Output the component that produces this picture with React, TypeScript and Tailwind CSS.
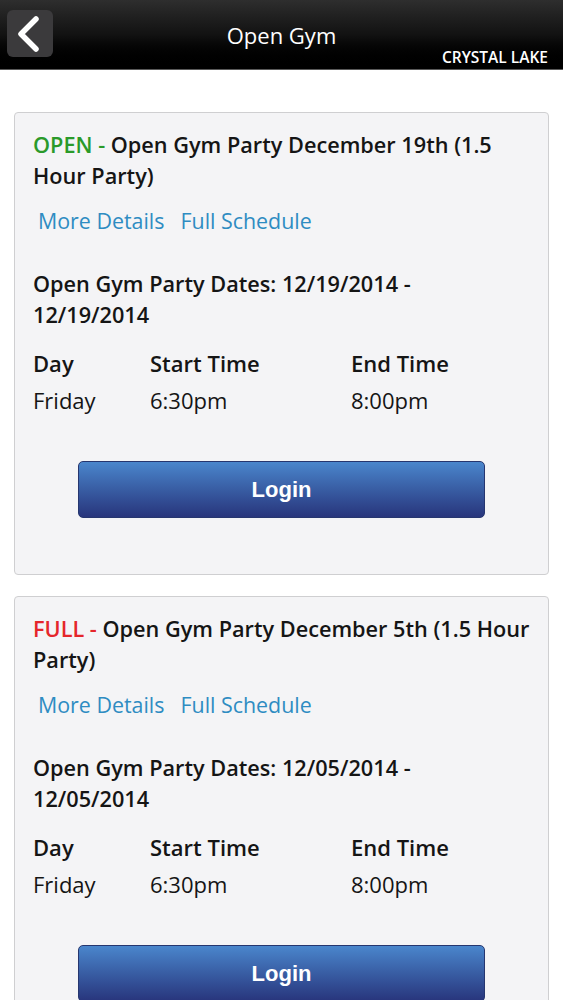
import React from "react";

type Party = {
  status: "OPEN" | "FULL";
  title: string;
  from: string;
  to: string;
  day: string;
  start: string;
  end: string;
};

const parties: Party[] = [
  {
    status: "OPEN",
    title: "Open Gym Party December 19th (1.5 Hour Party)",
    from: "12/19/2014",
    to: "12/19/2014",
    day: "Friday",
    start: "6:30pm",
    end: "8:00pm",
  },
  {
    status: "FULL",
    title: "Open Gym Party December 5th (1.5 Hour Party)",
    from: "12/05/2014",
    to: "12/05/2014",
    day: "Friday",
    start: "6:30pm",
    end: "8:00pm",
  },
];

const Header = () => (
  <div className="relative h-[70px] w-full bg-gradient-to-b from-[#2e2e2e] via-[#121212] to-black border-b border-[#5a5a5a]">
    <button className="absolute left-[7px] top-[10px] h-[47px] w-[46px] rounded-[6px] bg-[#3b3a3c] flex items-center justify-center">
      <svg width="30" height="40" viewBox="0 0 30 40" fill="none">
        <path
          d="M21 5 L6 20 L21 35"
          stroke="white"
          strokeWidth="5.5"
          strokeLinecap="round"
          strokeLinejoin="round"
        />
      </svg>
    </button>
    <div className="absolute inset-x-0 top-[19px] text-center text-white text-[22px] leading-[32px]">
      Open Gym
    </div>
    <div className="absolute right-[15px] top-[46px] text-white text-[15.5px] leading-[22px] font-semibold">
      CRYSTAL LAKE
    </div>
  </div>
);

const PartyCard = ({ party }: { party: Party }) => (
  <div className="rounded-[4px] border border-[#cfcfd1] bg-[#f4f4f6] pl-[18px] pr-[14px] pt-[16px] pb-[56px]">
    <div className="text-[21.7px] leading-[31px] font-semibold text-[#151515]">
      <span
        className={
          party.status === "OPEN" ? "text-[#2a9a2a]" : "text-[#e5262b]"
        }
      >
        {party.status} -{" "}
      </span>
      {party.title}
    </div>

    <div className="mt-[14px] flex gap-[16px] pl-[5px] text-[21.4px] leading-[31px] text-[#2e8cc2]">
      <span>More Details</span>
      <span>Full Schedule</span>
    </div>

    <p className="mt-[32px] pr-[80px] text-[21.7px] leading-[31px] font-semibold text-[#151515]">
      Open Gym Party Dates: {party.from} - {party.to}
    </p>

    <div className="mt-[15px] grid grid-cols-[117px_201px_1fr] text-[22px] leading-[37px] text-[#151515]">
      <span className="font-semibold">Day</span>
      <span className="font-semibold">Start Time</span>
      <span className="font-semibold">End Time</span>
      <span>{party.day}</span>
      <span>{party.start}</span>
      <span>{party.end}</span>
    </div>

    <div className="mt-[42px] flex justify-center pr-[4px]">
      <button className="h-[57px] w-[407px] rounded-[5px] border border-[#26366f] bg-gradient-to-b from-[#4a86cc] to-[#28357c] text-white text-[22px] font-bold font-['Liberation_Sans',Arial,sans-serif]">
        Login
      </button>
    </div>
  </div>
);

export default function App() {
  return (
    <div className="min-h-screen w-full bg-white font-['Open_Sans','Noto_Sans',sans-serif]">
      <Header />
      <div className="flex flex-col gap-[21px] px-[14px] pt-[42px] pb-6">
        {parties.map((p) => (
          <PartyCard key={p.title} party={p} />
        ))}
      </div>
    </div>
  );
}
